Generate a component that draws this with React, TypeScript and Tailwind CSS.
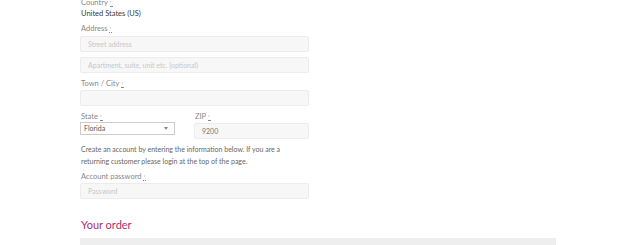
function Label({ text }: { text: string }) {
  return (
    <div className="h-[10px] text-[7.5px] leading-[10px] text-[#888]">
      {text}{' '}
      <abbr className="no-underline border-b border-dotted border-[#888] text-[5px] align-top text-[#aaa]">*</abbr>
    </div>
  )
}

function Field({ placeholder = '', value = '', className = '' }: { placeholder?: string; value?: string; className?: string }) {
  return (
    <div
      className={`h-[16px] rounded-[2px] border border-[#ececec] bg-[#f7f7f7] px-[7px] flex items-center text-[7px] ${
        value ? 'text-[#777]' : 'text-[#c8c8c8]'
      } ${className}`}
    >
      {value || placeholder}
    </div>
  )
}

export default function App() {
  return (
    <main className="w-[636px] h-[245px] overflow-hidden bg-white font-['Lato',sans-serif]">
      <div className="w-[476px] ml-[80px] -mt-[2px]">
        <div className="w-[229px]">
          <div className="pl-px"><Label text="Country" /></div>
          <div className="mt-px pl-px h-[10px] text-[7.5px] leading-[10px] text-[#3a3a3a]">United States (US)</div>

          <div className="mt-[5px] pl-px"><Label text="Address" /></div>
          <Field placeholder="Street address" className="mt-[2px]" />
          <Field placeholder="Apartment, suite, unit etc. (optional)" className="mt-[5px]" />

          <div className="mt-[6px] pl-px"><Label text="Town / City" /></div>
          <Field className="mt-px" />

          <div className="mt-[6px] flex gap-[19px]">
            <div className="w-[95px]">
              <div className="pl-px"><Label text="State" /></div>
              <div className="h-[13px] border border-[#ccc] bg-white pl-[3px] pr-[6px] flex items-center justify-between text-[7px] text-[#555]">
                <span>Florida</span>
                <span className="w-0 h-0 border-l-[2px] border-r-[2px] border-t-[3px] border-l-transparent border-r-transparent border-t-[#888]" />
              </div>
            </div>
            <div className="flex-1">
              <div className="pl-px"><Label text="ZIP" /></div>
              <Field value="9200" className="mt-px" />
            </div>
          </div>

          <p className="mt-[4px] pl-px text-[7px] leading-[12px] text-[#666] w-[214px]">
            Create an account by entering the information below. If you are a returning customer please login at the top of
            the page.
          </p>

          <div className="mt-[5px] pl-px"><Label text="Account password" /></div>
          <Field placeholder="Password" className="mt-px" />
        </div>

        <h2 className="mt-[18px] pl-px h-[16px] text-[11px] leading-[16px] text-[#b02d68] font-['Lato',sans-serif] font-normal">
          Your order
        </h2>
        <div className="mt-[5px] h-[10px] bg-[#eeeeee]" />
      </div>
    </main>
  )
}
